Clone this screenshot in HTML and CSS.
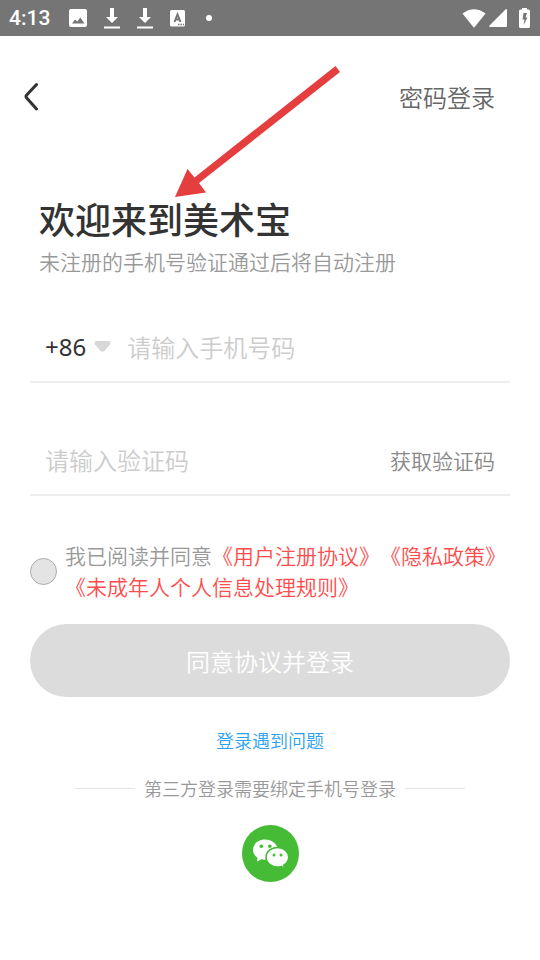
FILE: index.html
```html
<!DOCTYPE html>
<html lang="zh-CN">
<head>
<meta charset="utf-8">
<meta name="viewport" content="width=device-width, initial-scale=1">
<title>登录</title>
<link rel="stylesheet" href="styles.css">
</head>
<body>
<div class="status">
  <span class="clock">4:13</span>
  <div class="notices">
    <svg width="18" height="18" viewBox="0 0 18 18"><path fill="#fff" fill-rule="evenodd" d="M2 0h14a2 2 0 0 1 2 2v14a2 2 0 0 1-2 2H2a2 2 0 0 1-2-2V2a2 2 0 0 1 2-2zM3 14.500h12.500L11.300 8.500 8.300 12.500 6 10.500z"/></svg>
    <svg width="16" height="21" viewBox="0 0 16 21"><path fill="#fff" d="M6 0h4v9h4l-6 6-6-6h4zM0 18.500h16v2H0z"/></svg>
    <svg width="16" height="21" viewBox="0 0 16 21"><path fill="#fff" d="M6 0h4v9h4l-6 6-6-6h4zM0 18.500h16v2H0z"/></svg>
    <svg width="15" height="17" viewBox="0 0 15 17"><rect width="15" height="16.500" rx="1.500" fill="#fff"/><path d="M4.500 12 7.500 4.500 10.500 12M5.500 9.500h4" fill="none" stroke="#757575" stroke-width="2"/><path d="M8 14.500h1.500M10.500 14.500H12M13 14.500h1" stroke="#757575" stroke-width="1.300"/></svg>
    <svg class="dot" width="6" height="6" viewBox="0 0 6 6"><circle cx="3" cy="3" r="3" fill="#fff"/></svg>
  </div>
  <div class="signals">
    <svg width="24" height="19" viewBox="0 0 24 19"><path fill="#fff" d="M.500 4.500Q12-4 23.500 4.500L12.500 18.200q-.500.600-1 0z"/></svg>
    <svg width="18" height="18" viewBox="0 0 18 18"><path fill="#fff" d="M17 0q1 0 1 1v16q0 1-1 1H1q-1.200-.500-.500-1.500z"/></svg>
    <svg class="battery" width="11" height="20" viewBox="0 0 11 20"><path fill="#fff" fill-rule="evenodd" d="M3 0h5v1.500h1.500A1.500 1.500 0 0 1 11 3v15.500a1.500 1.500 0 0 1-1.500 1.500h-8A1.500 1.500 0 0 1 0 18.500V3a1.500 1.500 0 0 1 1.500-1.500H3zM4.500 5 3.500 11.500h2L4.500 17 8.500 9.500H6.500L8 5z"/></svg>
  </div>
</div>

<header class="nav">
  <button class="back" type="button" aria-label="返回">
    <svg width="16" height="30" viewBox="0 0 16 30"><path d="M12.500 2.500 2.500 13.200q-1 1.300 0 2.600L12.500 27" fill="none" stroke="#333" stroke-width="3" stroke-linecap="round"/></svg>
  </button>
  <a class="mode" href="#password">密码登录</a>
</header>

<main>
  <section class="intro">
    <svg class="arrow" width="166" height="134" viewBox="0 0 166 134" aria-hidden="true"><path fill="#e53e3e" d="M160.500 0 165 6 24 117 31 126.500 0 131 12.500 103 19.500 111.500z"/></svg>
    <h1>欢迎来到美术宝</h1>
    <p>未注册的手机号验证通过后将自动注册</p>
  </section>

  <form>
    <div class="field">
      <button class="prefix" type="button" aria-label="国家或地区代码 +86">+86
        <svg width="18" height="12" viewBox="0 0 18 12"><path fill="#d8d8d8" d="M2.500 0h12q3 .500 1.500 3.500L10.500 10q-2 1.500-4 0L1 3.500Q-.500.500 2.500 0z"/></svg>
      </button>
      <input type="tel" aria-label="手机号码" placeholder="请输入手机号码">
    </div>
    <div class="field">
      <input type="text" inputmode="numeric" aria-label="验证码" placeholder="请输入验证码">
      <button class="send" type="button">获取验证码</button>
    </div>
    <div class="agree">
      <input id="agree" type="checkbox">
      <label for="agree">我已阅读并同意<a href="#terms">《用户注册协议》</a><a href="#privacy">《隐私政策》</a><a href="#minors">《未成年人个人信息处理规则》</a></label>
    </div>
    <button class="submit" type="submit">同意协议并登录</button>
  </form>

  <a class="help" href="#help">登录遇到问题</a>
  <div class="third">第三方登录需要绑定手机号登录</div>
  <button class="wechat" type="button" aria-label="微信登录">
    <svg viewBox="0 0 57 57"><circle cx="28.500" cy="28.500" r="28.500" fill="#46bb36"/>
      <path fill="#fff" d="M23 14.500c-6.800 0-12 4.500-12 10.300 0 3.300 1.600 6 4.500 7.900L15 36.500l4.500-2.300c1.500.400 3.500.600 5.500.300 6-.800 10.500-5 10.500-9.900 0-5.700-5.500-10.100-12.500-10.100z"/>
      <path fill="#fff" stroke="#46bb36" stroke-width="1.500" d="M35.500 22.500c-6.500 0-11.500 4.300-11.500 9.700s5 9.800 11.500 9.800c1.300 0 2.600-.200 3.800-.600l3.200 1.900-.700-3.200c3.200-1.900 4.900-4.700 4.900-7.900 0-5.400-4.900-9.700-11.200-9.700z"/>
      <g fill="#46bb36"><circle cx="19.300" cy="21.300" r="1.800"/><circle cx="27.800" cy="21.300" r="1.800"/><circle cx="32" cy="30" r="1.500"/><circle cx="39" cy="30" r="1.500"/></g></svg>
  </button>
</main>
</body>
</html>
```
FILE: styles.css
```css
* { box-sizing: border-box; }

body {
  margin: 0;
  background: #fff;
  color: #333;
  font-family: "Noto Sans CJK SC", sans-serif;
  font-size: 24px;
  font-weight: 350;
  text-spacing-trim: space-all;
}

svg { display: block; flex: none; }

a { color: inherit; text-decoration: none; }

button, input {
  margin: 0;
  padding: 0;
  border: 0;
  background: none;
  color: inherit;
  font: inherit;
}

.status {
  display: flex;
  align-items: center;
  height: 36px;
  padding: 0 10px 0 9px;
  background: #757575;
  color: #fff;
}

.clock {
  width: 60px;
  font-family: Roboto, sans-serif;
  font-size: 21px;
  font-weight: 500;
}

.notices {
  display: flex;
  align-items: center;
  gap: 17px;
}

.dot { margin-left: 4px; }

.signals {
  display: flex;
  align-items: center;
  gap: 3px;
  margin-left: auto;
}

.battery { margin-left: 9px; }

.nav {
  display: flex;
  align-items: center;
  justify-content: space-between;
  height: 121px;
  padding: 0 45px 0 24px;
}

.mode { color: #666; }

.intro {
  position: relative;
  padding: 39px 39px 37px;
}

.arrow {
  position: absolute;
  top: -91px;
  left: 175px;
}

h1 {
  margin: 0 0 5px;
  font-size: 36px;
  font-weight: 500;
  line-height: 44px;
}

p {
  margin: 0;
  color: #999;
  font-size: 21px;
  line-height: 32px;
}

form { padding: 0 30px; }

.field {
  display: flex;
  align-items: center;
  height: 69px;
  margin-bottom: 44px;
  padding: 0 15px 2px;
  border-bottom: 2px solid #eee;
}

.field input {
  flex: 1;
  min-width: 0;
  outline: 0;
}

.field input::placeholder { color: #ccc; }

.prefix {
  display: flex;
  align-items: center;
  gap: 8px;
  margin-right: 15px;
  font-family: "Noto Sans", sans-serif;
  font-weight: 400;
}

.send {
  color: #888;
  font-size: 21px;
}

.agree {
  display: flex;
  align-items: center;
  gap: 8px;
  margin-bottom: 22px;
}

.agree input {
  flex: none;
  width: 27px;
  height: 27px;
  border: 1px solid #aaa;
  border-radius: 50%;
  background: #e4e4e4;
  appearance: none;
}

.agree input:checked { background: #ff4c4c; }

.agree label {
  color: #999;
  font-size: 21px;
  line-height: 31px;
}

.agree a { color: #ff4c4c; }

.submit {
  display: block;
  width: 100%;
  height: 73px;
  border-radius: 37px;
  background: #dcdcdc;
  color: #fff;
}

.help {
  display: block;
  width: fit-content;
  margin: 30px auto 22px;
  color: #2ea1f2;
  font-size: 18px;
  line-height: 26px;
}

.third {
  display: flex;
  align-items: center;
  gap: 9px;
  margin: 0 75px 24px;
  color: #999;
  font-size: 18px;
  line-height: 26px;
}

.third::before,
.third::after {
  content: "";
  flex: 1;
  height: 1px;
  background: #e4e4e4;
}

.wechat {
  display: block;
  width: 57px;
  height: 57px;
  margin: 0 auto;
}
```
